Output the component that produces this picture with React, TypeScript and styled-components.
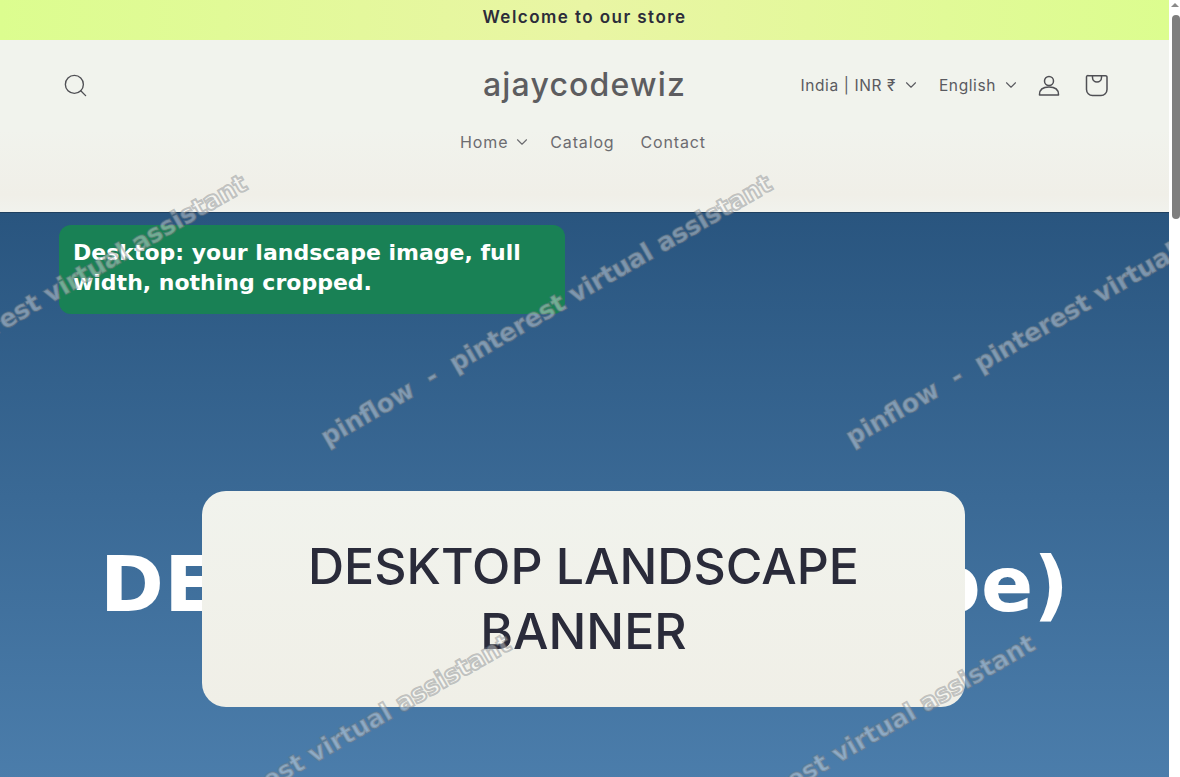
import styled, { createGlobalStyle } from 'styled-components';
import { ChevronDown, Search } from 'lucide-react';

const GlobalStyle = createGlobalStyle`
  html, body {
    height: 100%;
    overflow: hidden;
  }
  body {
    margin: 0;
    background: #fff;
    font-family: Inter, "Liberation Sans", sans-serif;
  }
`;

const Shell = styled.div`
  display: flex;
  height: 100vh;
  overflow: hidden;
`;

const Page = styled.div`
  position: relative;
  flex: 1;
  min-width: 0;
  overflow: hidden;
`;

const ScrollTrack = styled.div`
  width: 11px;
  flex: none;
  background: #fff;
  display: flex;
  flex-direction: column;
  align-items: flex-end;
`;

const ScrollArrow = styled.div`
  width: 0;
  height: 0;
  margin: 3px 1px 8px 0;
  border-left: 4px solid transparent;
  border-right: 4px solid transparent;
  border-bottom: 4px solid #8a8a8a;
`;

const ScrollThumb = styled.div`
  width: 8px;
  height: 204px;
  border-radius: 4px;
  background: #7e7e7e;
`;

const Announcement = styled.div`
  height: 40px;
  box-sizing: border-box;
  padding-bottom: 6px;
  display: flex;
  align-items: center;
  justify-content: center;
  background: linear-gradient(90deg, #dcfd8f 0%, #e9f5a4 50%, #dcfd8f 100%);
  color: #2c2c3a;
  font-size: 17px;
  font-weight: 600;
  letter-spacing: 1.45px;
`;

const Header = styled.header`
  height: 172px;
  box-sizing: border-box;
  padding: 0 59px;
  background: linear-gradient(180deg, #f1f3ed 0%, #f1f3ed 52%, #f0efe8 90%, #f1f2ed 100%);
  display: flex;
  flex-direction: column;
`;

const TopRow = styled.div`
  height: 90px;
  display: grid;
  grid-template-columns: 1fr auto 1fr;
  align-items: center;
`;

const IconButton = styled.span<{ $left?: number; $right?: number }>`
  display: inline-flex;
  margin-left: ${p => p.$left ?? 0}px;
  margin-right: ${p => p.$right ?? 0}px;
  color: #4f4f54;
`;

const Logo = styled.div`
  color: #5d5d60;
  font-size: 32px;
  font-weight: 500;
  letter-spacing: 1.2px;
  margin-top: -2px;
`;

const Actions = styled.div`
  display: flex;
  align-items: center;
  justify-content: flex-end;
  padding-right: 1px;
`;

const Selector = styled.span<{ $gap: number }>`
  display: inline-flex;
  align-items: center;
  gap: 6px;
  margin-right: ${p => p.$gap}px;
  color: #5a5a60;
  font-size: 15.5px;
  letter-spacing: 0.6px;
`;

const Nav = styled.nav`
  display: flex;
  justify-content: center;
  align-items: center;
  height: 24px;
  padding-right: 3px;
  color: #6c6c70;
  font-size: 16px;
  letter-spacing: 0.85px;
`;

const NavItem = styled.span<{ $gap: number }>`
  display: inline-flex;
  align-items: center;
  gap: 5px;
  margin-right: ${p => p.$gap}px;
`;

const Hero = styled.section`
  position: relative;
  height: 660px;
  padding-top: 279px;
  box-sizing: border-box;
  background: linear-gradient(180deg, #29557f 0%, #4b7dab 86%, #4f82b0 100%);
  box-shadow: inset 0 1px #1f4060;
  display: grid;
`;

const BackdropTitle = styled.div`
  grid-area: 1 / 1;
  height: 216px;
  display: flex;
  align-items: center;
  justify-content: center;
  padding-bottom: 30px;
  box-sizing: border-box;
  color: #fff;
  font-family: "DejaVu Sans", sans-serif;
  font-size: 77px;
  font-weight: 700;
  letter-spacing: 0.2px;
  white-space: nowrap;
`;

const BannerCard = styled.div`
  grid-area: 1 / 1;
  justify-self: center;
  z-index: 1;
  width: 763px;
  height: 216px;
  margin-right: 2px;
  border-radius: 24px;
  background: linear-gradient(180deg, #f1f3ed 0%, #f0efe7 100%);
  color: #2a2b3a;
  font-size: 50px;
  font-weight: 500;
  line-height: 65px;
  text-align: center;
  display: flex;
  align-items: center;
  justify-content: center;
  box-sizing: border-box;
  padding: 0 100px;
`;

const Note = styled.div`
  position: absolute;
  z-index: 2;
  top: 13px;
  left: 59px;
  width: 506px;
  box-sizing: border-box;
  padding: 13px 14px 16px;
  border-radius: 12px;
  background: #198155;
  color: #fff;
  font-family: "DejaVu Sans", sans-serif;
  font-size: 22px;
  font-weight: 700;
  line-height: 30px;
`;

const Watermark = styled.span<{ $left: number; $top: number }>`
  position: absolute;
  z-index: 3;
  left: ${p => p.$left}px;
  top: ${p => p.$top}px;
  transform: rotate(-30deg);
  transform-origin: 0 100%;
  font-family: "DejaVu Sans", sans-serif;
  font-size: 25px;
  font-weight: 700;
  line-height: 1;
  white-space: pre;
  color: rgba(255, 255, 255, 0.38);
  -webkit-text-stroke: 2px rgba(120, 125, 130, 0.42);
  pointer-events: none;
`;

const spots = [
  { left: -196, top: 425 },
  { left: 329, top: 425 },
  { left: 854, top: 425 },
  { left: 68, top: 885 },
  { left: 592, top: 885 },
];

const UserIcon = () => (
  <svg width="24" height="24" viewBox="0 0 24 24" fill="none" stroke="currentColor" strokeWidth="1.5">
    <circle cx="12" cy="8" r="4.5" />
    <path d="M2.5 21.500c0-5 4-7.500 9.500-7.500s9.500 2.500 9.500 7.500v.5h-19z" strokeLinejoin="round" />
  </svg>
);

const BagIcon = () => (
  <svg width="24" height="24" viewBox="0 0 24 24" fill="none" stroke="currentColor" strokeWidth="1.5">
    <path d="M3.500 2.700h17a1.500 1.500 0 0 1 1.500 1.500v12.300a6 6 0 0 1-6 6H7.500a6 6 0 0 1-6-6V4.200a1.500 1.500 0 0 1 2-1.500z" />
    <path d="M7.500 3v1.500a4.500 4.500 0 0 0 9 0V3" />
  </svg>
);

const App = () => {
  return (
    <Shell>
      <GlobalStyle />
      <Page>
        <Announcement>Welcome to our store</Announcement>
        <Header>
          <TopRow>
            <IconButton $left={3}>
              <Search size={27} strokeWidth={1.2} />
            </IconButton>
            <Logo>ajaycodewiz</Logo>
            <Actions>
              <Selector $gap={19}>
                India | INR ₹ <ChevronDown size={18} strokeWidth={1.5} />
              </Selector>
              <Selector $gap={17}>
                English <ChevronDown size={18} strokeWidth={1.5} />
              </Selector>
              <IconButton $right={24}>
                <UserIcon />
              </IconButton>
              <IconButton>
                <BagIcon />
              </IconButton>
            </Actions>
          </TopRow>
          <Nav>
            <NavItem $gap={19}>
              Home <ChevronDown size={18} strokeWidth={1.5} />
            </NavItem>
            <NavItem $gap={26}>Catalog</NavItem>
            <NavItem $gap={0}>Contact</NavItem>
          </Nav>
        </Header>
        <Hero>
          <BackdropTitle>DESKTOP (Landscape)</BackdropTitle>
          <BannerCard>DESKTOP LANDSCAPE BANNER</BannerCard>
          <Note>Desktop: your landscape image, full width, nothing cropped.</Note>
        </Hero>
        {spots.map(s => (
          <Watermark key={s.left} $left={s.left} $top={s.top}>
            {'pinflow  -  pinterest virtual assistant'}
          </Watermark>
        ))}
      </Page>
      <ScrollTrack>
        <ScrollArrow />
        <ScrollThumb />
      </ScrollTrack>
    </Shell>
  );
};

export default App;
